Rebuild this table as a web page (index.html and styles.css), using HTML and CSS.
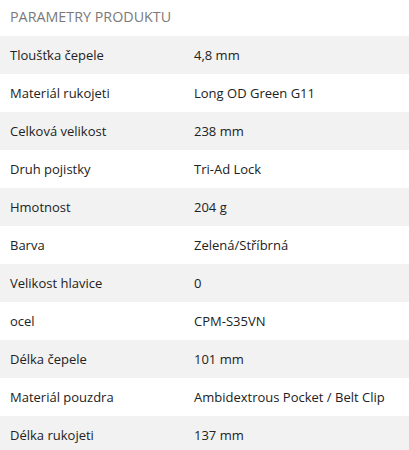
FILE: index.html
```html
<!DOCTYPE html>
<html lang="cs">
<head>
<meta charset="utf-8">
<link rel="stylesheet" href="styles.css">
</head>
<body>
<div class="params">
  <h2 class="params-title">PARAMETRY PRODUKTU</h2>
  <table class="params-table">
    <tbody>
      <tr><td>Tloušťka čepele</td><td>4,8 mm</td></tr>
      <tr><td>Materiál rukojeti</td><td>Long OD Green G11</td></tr>
      <tr><td>Celková velikost</td><td>238 mm</td></tr>
      <tr><td>Druh pojistky</td><td>Tri-Ad Lock</td></tr>
      <tr><td>Hmotnost</td><td>204 g</td></tr>
      <tr><td>Barva</td><td>Zelená/Stříbrná</td></tr>
      <tr><td>Velikost hlavice</td><td>0</td></tr>
      <tr><td>ocel</td><td>CPM-S35VN</td></tr>
      <tr><td>Délka čepele</td><td>101 mm</td></tr>
      <tr><td>Materiál pouzdra</td><td>Ambidextrous Pocket / Belt Clip</td></tr>
      <tr><td>Délka rukojeti</td><td>137 mm</td></tr>
    </tbody>
  </table>
</div>
</body>
</html>
```
FILE: styles.css
```css
html, body {
  margin: 0;
  padding: 0;
  background: #fff;
}
body {
  font-family: "Open Sans", "DejaVu Sans", sans-serif;
  color: #222;
}
.params-title {
  margin: 0;
  height: 36px;
  padding: 7px 0 0 10px;
  box-sizing: border-box;
  font-size: 14.3px;
  font-weight: 400;
  line-height: 20px;
  color: #7a7a7a;
}
.params-table {
  width: 100%;
  border-collapse: collapse;
  font-size: 13px;
}
.params-table td {
  height: 38px;
  padding: 0 10px;
  box-sizing: border-box;
  vertical-align: middle;
  line-height: 18px;
}
.params-table td:first-child {
  width: 184px;
}
.params-table tr:nth-child(odd) td {
  background: #f2f2f2;
}
```
